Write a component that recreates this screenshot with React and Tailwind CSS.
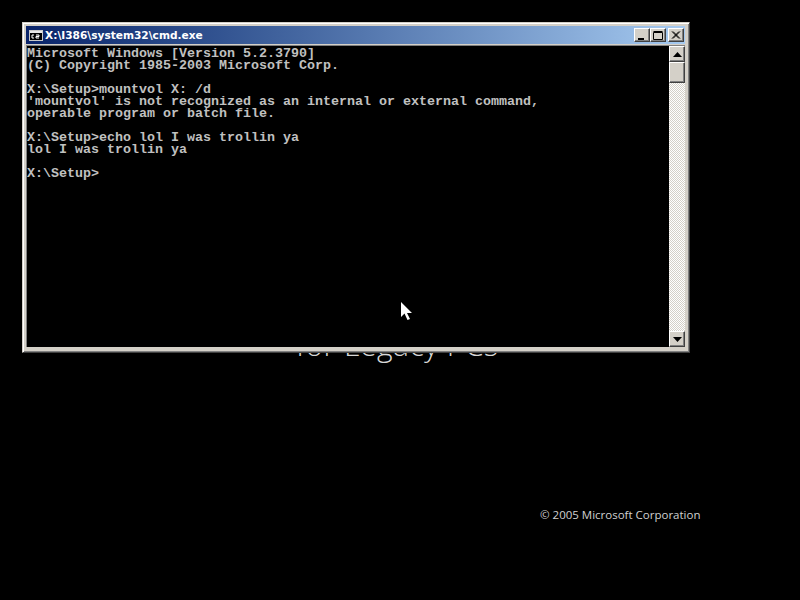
const lines = [
  'Microsoft Windows [Version 5.2.3790]',
  '(C) Copyright 1985-2003 Microsoft Corp.',
  '',
  'X:\\Setup>mountvol X: /d',
  "'mountvol' is not recognized as an internal or external command,",
  'operable program or batch file.',
  '',
  'X:\\Setup>echo lol I was trollin ya',
  'lol I was trollin ya',
  '',
  'X:\\Setup>',
];

const raised =
  'border border-t-white border-l-white border-r-[#404040] border-b-[#404040] bg-[#d4d0c8] shadow-[inset_-1px_-1px_0_#808080]';

function CaptionButton({ children }) {
  return (
    <div className={`flex h-[14px] w-[16px] items-center justify-center ${raised}`}>
      <svg width="10" height="9" viewBox="0 0 10 9" fill="none" stroke="#000">
        {children}
      </svg>
    </div>
  );
}

function ScrollArrow({ up }) {
  return (
    <div className={`flex h-[16px] w-[16px] shrink-0 items-center justify-center ${raised}`}>
      <svg width="9" height="5" viewBox="0 0 9 5" fill="#000">
        <path d={up ? 'M4.5 0L9 5H0z' : 'M0 0h9L4.5 5z'} />
      </svg>
    </div>
  );
}

function CmdIcon() {
  return (
    <svg width="14" height="11" viewBox="0 0 14 11" className="shrink-0">
      <rect x="0.5" y="0.5" width="13" height="10" fill="#000" stroke="#c8c8c8" />
      <rect x="1" y="1" width="12" height="2" fill="#e8e8e8" />
      <path d="M5 5H3v3h2M7 5h3v1.5H7V8h3" stroke="#fff" fill="none" />
    </svg>
  );
}

export default function App() {
  return (
    <div className="relative h-[600px] w-[800px] overflow-hidden bg-black">
      {/* setup splash behind the console, mostly covered */}
      <div className="absolute left-[296px] top-[325px] font-['Open_Sans',sans-serif] text-[30px] font-light leading-[40px] tracking-[0.5px] text-[#d8d8d8]">
        for Legacy PCs
      </div>
      <div className="absolute left-[540px] top-[507px] font-['Open_Sans',sans-serif] text-[11.5px] leading-[16px] text-[#d0d0d0]">
        © 2005 Microsoft Corporation
      </div>

      <div className="absolute left-[22px] top-[22px] flex h-[331px] w-[668px] flex-col border border-t-[#d4d0c8] border-l-[#d4d0c8] border-r-[#404040] border-b-[#404040] bg-[#d4d0c8] pb-[5px] pl-[3px] pr-[4px] pt-[3px] shadow-[inset_1px_1px_0_#fff,inset_-1px_-1px_0_#808080]">
        <div className="flex h-[18px] shrink-0 items-center bg-gradient-to-r from-[#0a246a] to-[#a6caf0] pl-[3px] pr-[1px]">
          <CmdIcon />
          <span className="ml-[2px] font-['DejaVu_Sans',sans-serif] text-[10.6px] font-bold leading-none text-white">
            X:\I386\system32\cmd.exe
          </span>
          <div className="ml-auto flex items-center">
            <CaptionButton>
              <path d="M1 7.5h6M1 8.5h6" />
            </CaptionButton>
            <CaptionButton>
              <path d="M0.5 1.5h9v7h-9zM0.5 0.5h9" />
            </CaptionButton>
            <div className="ml-[2px]">
              <CaptionButton>
                <path d="M1 0.5l7 7M2 0.5l7 7M8 0.5l-7 7M9 0.5l-7 7" />
              </CaptionButton>
            </div>
          </div>
        </div>

        <div className="mt-[1px] flex min-h-0 flex-1 border-t border-l border-[#808080]">
          <div className="flex-1 overflow-hidden bg-black pt-[2px]">
            <pre className="font-['Liberation_Mono',monospace] text-[13.33px] font-bold leading-[12px] text-[#c0c0c0]">
              {lines.map((line, i) => (
                <div key={i} className="h-[12px]">
                  {line}
                </div>
              ))}
            </pre>
          </div>
          <div className="flex w-[16px] shrink-0 flex-col bg-[repeating-conic-gradient(#d4d0c8_0%_25%,#ffffff_0%_50%)] bg-[length:2px_2px]">
            <ScrollArrow up />
            <div className={`h-[21px] w-[16px] shrink-0 ${raised}`} />
            <div className="flex-1" />
            <ScrollArrow />
          </div>
        </div>
      </div>

      {/* mouse pointer */}
      <svg width="13" height="21" viewBox="0 0 13 21" className="absolute left-[400px] top-[301px]">
        <path d="M1 1v15l3.5-3.5L7.5 19l2.5-1-3-6h5z" fill="#fff" />
      </svg>
    </div>
  );
}
